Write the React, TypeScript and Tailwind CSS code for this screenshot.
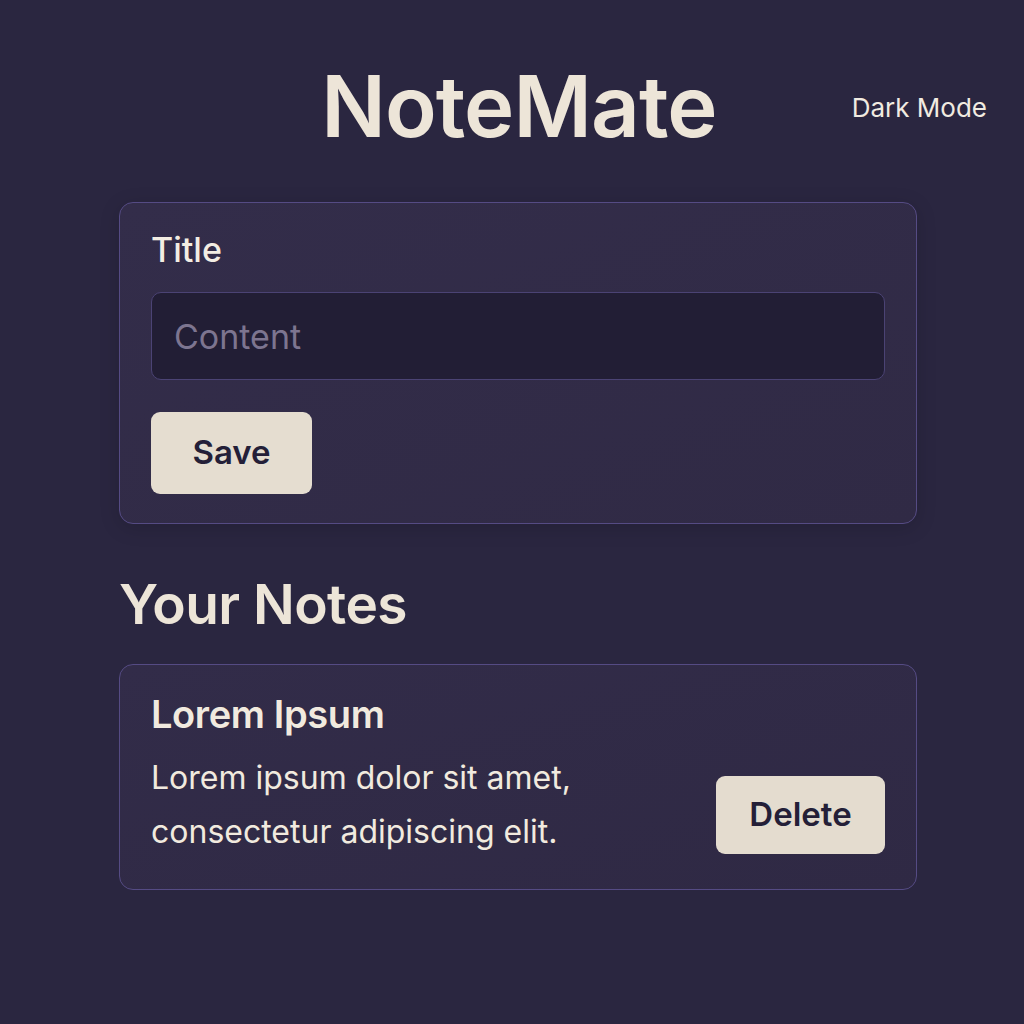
import React from "react";

const font = { fontFamily: "Inter, 'Noto Sans', sans-serif" };

export default function App() {
  const [title] = React.useState("Title");
  const [content, setContent] = React.useState("");

  return (
    <div
      style={font}
      className="min-h-[1024px] w-full bg-[#2a2640] pb-10 text-[#eee6da] antialiased"
    >
      {/* Header */}
      <header className="grid grid-cols-[1fr_auto_1fr] items-start pl-[14px] pt-[64px]">
        <div />
        <h1 className="text-[85px] font-semibold leading-none tracking-[-0.01em] text-[#ede5d8]">
          NoteMate
        </h1>
        <div className="flex justify-end pr-[37px] pt-[31px]">
          <span className="text-[26px] leading-none text-[#f1ebe1]">Dark Mode</span>
        </div>
      </header>

      <main className="ml-[119px] mt-[53px] flex w-[798px] flex-col">
        {/* Form card */}
        <section className="flex flex-col rounded-[14px] border border-[#554b84] bg-gradient-to-br from-[#332d4a] to-[#302a45] px-[31px] pb-[29px] pt-[26px] shadow-[0_4px_20px_rgba(0,0,0,0.15)]">
          <label className="text-[34px] font-medium leading-[42px] text-[#f3ede3]">
            {title}
          </label>
          <input
            value={content}
            onChange={(e) => setContent(e.target.value)}
            placeholder="Content"
            className="mt-[21px] h-[88px] w-full rounded-[10px] border border-[#4b4374] bg-[#221e35] px-[22px] text-[34px] text-[#eee6da] outline-none placeholder:text-[#7d7590]"
          />
          <div className="mt-[32px]">
            <button className="h-[82px] w-[161px] rounded-[9px] bg-[#e5ddd0] text-[33px] font-semibold text-[#241f38]">
              Save
            </button>
          </div>
        </section>

        {/* Notes */}
        <h2 className="mt-[47px] text-[55px] font-semibold leading-[66px] tracking-[-0.01em] text-[#ede5d8]">
          Your Notes
        </h2>

        <section className="mt-[27px] flex flex-col rounded-[14px] border border-[#554b84] bg-gradient-to-br from-[#322c49] to-[#2f2944] px-[31px] pb-[30px] pt-[27px]">
          <h3 className="text-[38px] font-semibold leading-[44px] tracking-[-0.01em] text-[#f1eadf]">
            Lorem Ipsum
          </h3>
          <div className="mt-[15px] flex items-center justify-between">
            <p className="max-w-[460px] text-[32px] leading-[54px] text-[#f1eadf]">
              Lorem ipsum dolor sit amet, consectetur adipiscing elit.
            </p>
            <button className="mt-[20px] h-[78px] w-[169px] rounded-[9px] bg-[#e4dccf] text-[33px] font-semibold text-[#241f38]">
              Delete
            </button>
          </div>
        </section>
      </main>
    </div>
  );
}
